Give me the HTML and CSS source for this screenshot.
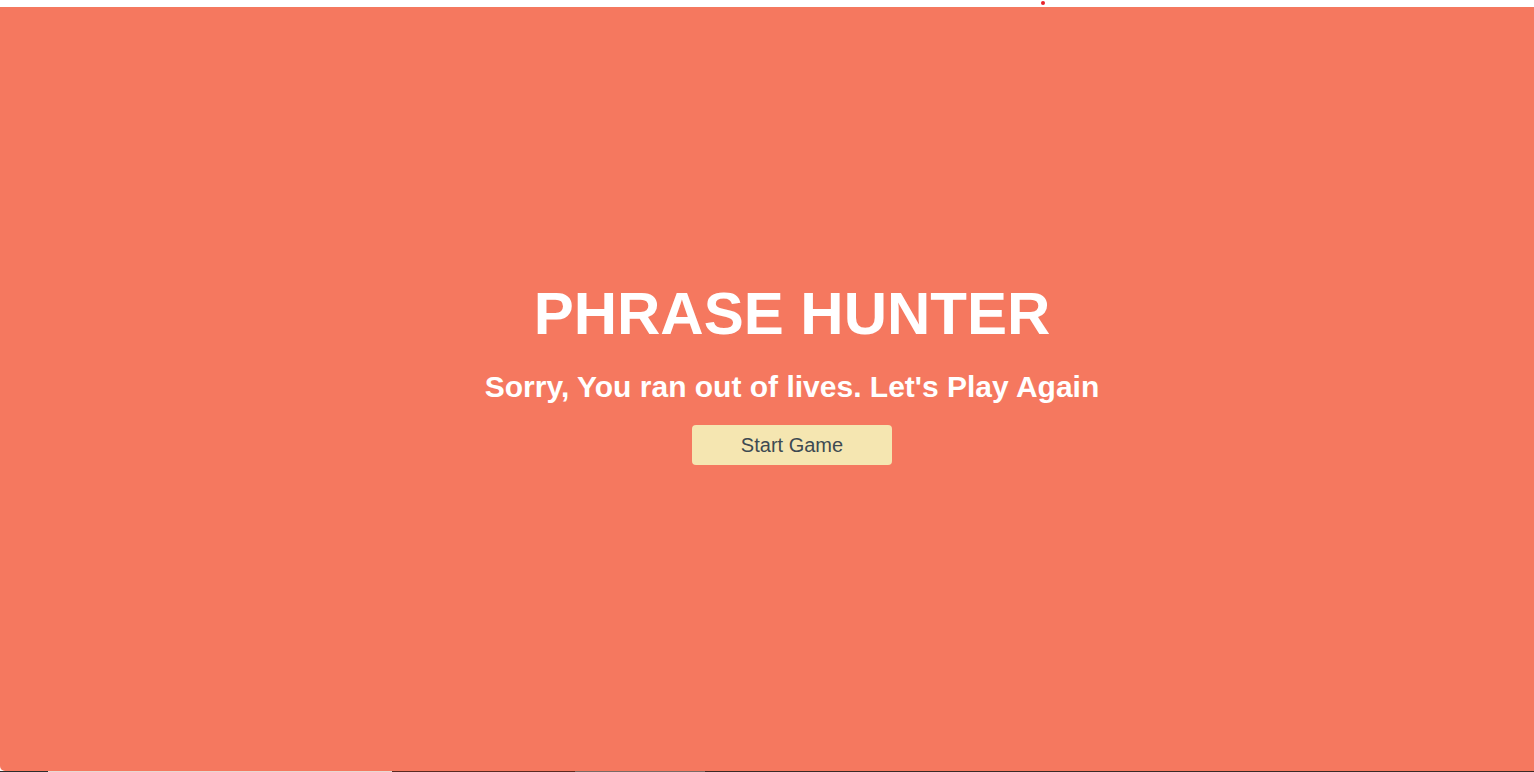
FILE: index.html
```html
<!DOCTYPE html>
<html>
<head>
<meta charset="utf-8">
<link rel="stylesheet" href="styles.css">
</head>
<body>
<div class="topbar"><span class="dot"></span></div>
<div class="overlay">
  <h2 class="title">PHRASE HUNTER</h2>
  <h3 class="message">Sorry, You ran out of lives. Let's Play Again</h3>
  <button class="btn-reset">Start Game</button>
</div>
<div class="under">
  <span class="seg s1"></span><span class="seg s2"></span><span class="seg s3"></span><span class="seg s4"></span><span class="seg s5"></span>
</div>
</body>
</html>
```
FILE: styles.css
```css
html, body {
  margin: 0;
  padding: 0;
  background: #ffffff;
  font-family: "Liberation Sans", Arial, sans-serif;
  overflow: hidden;
}
.topbar {
  height: 7px;
  position: relative;
}
.dot {
  position: absolute;
  left: 1041px;
  top: 1px;
  width: 4px;
  height: 4px;
  border-radius: 50%;
  background: #e8232a;
}
.overlay {
  height: 764px;
  box-sizing: border-box;
  background: #f5785f;
  border-bottom-left-radius: 5px;
  display: flex;
  flex-direction: column;
  align-items: center;
  padding-top: 272px;
  padding-left: 50px;
  color: #ffffff;
}
.title {
  margin: 0;
  font-size: 60px;
  font-weight: bold;
  line-height: 69px;
}
.message {
  margin: 21px 0 0;
  font-size: 30px;
  font-weight: bold;
  line-height: 35px;
}
.btn-reset {
  margin-top: 21px;
  width: 200px;
  height: 40px;
  border: none;
  border-radius: 4px;
  background: #f5e6b1;
  color: #3d4a52;
  font-family: "Liberation Sans", Arial, sans-serif;
  font-size: 20px;
  padding: 0;
}
.under {
  display: flex;
  height: 1px;
  background: #3a2a27;
}
.seg { height: 1px; }
.s1 { width: 48px; background: #2c2c2c; }
.s2 { width: 344px; background: #e8d8d2; }
.s3 { width: 183px; background: #5a2a22; }
.s4 { width: 130px; background: #7a6a66; }
.s5 { flex: 1; background: #3a2a27; }
```
